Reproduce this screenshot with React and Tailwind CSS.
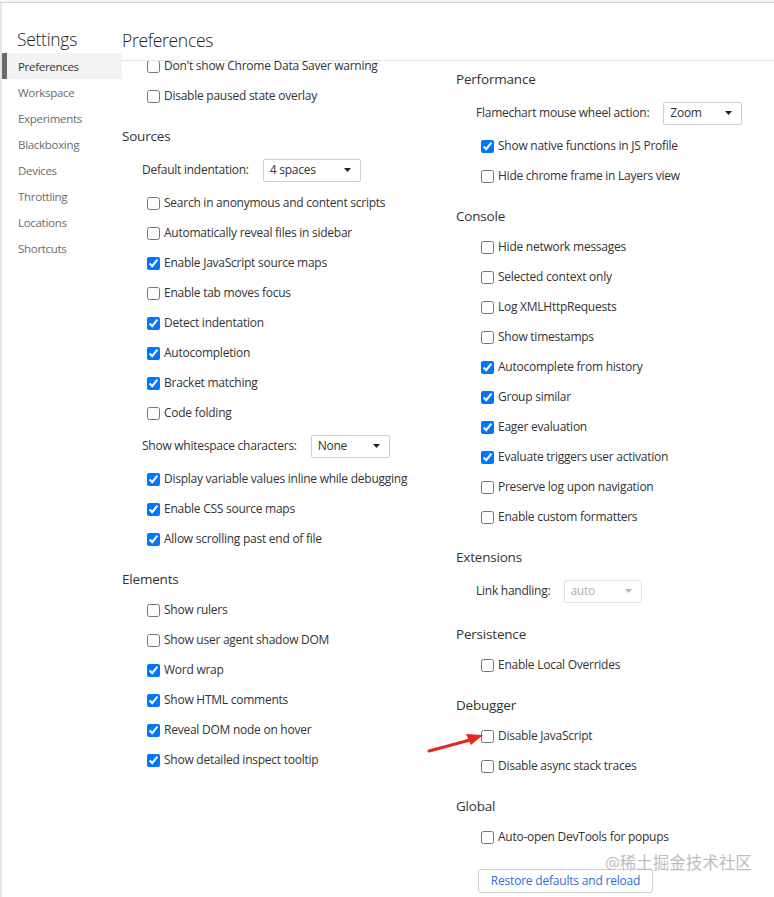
import React from 'react';

const FONT = { fontFamily: '"Open Sans", "Noto Sans CJK SC", sans-serif' };

const sidebar = ['Preferences', 'Workspace', 'Experiments', 'Blackboxing', 'Devices', 'Throttling', 'Locations', 'Shortcuts'];

function Check({ label, checked }) {
    return (
        <label className="flex h-[30px] items-center gap-[4px] pl-[25px] text-[12px] tracking-[-0.25px] text-[#333]">
            <input type="checkbox" defaultChecked={checked} className="m-0 h-[13px] w-[13px]" />
            <span>{label}</span>
        </label>
    );
}

function Select({ label, value, width, disabled }) {
    return (
        <div className="flex h-[36px] items-center gap-[14px] pl-[20px] text-[12px] tracking-[-0.25px] text-[#333]">
            <span>{label}</span>
            <div
                className={
                    disabled
                        ? 'flex h-[23px] items-center justify-between rounded-[2px] border border-[#e3e3e3] pl-[5px] pr-[9px] text-[#b0b0b0]'
                        : 'flex h-[23px] items-center justify-between rounded-[2px] border border-[#cdcdcd] pl-[6px] pr-[9px] text-[#333]'
                }
                style={{ width }}
            >
                <span>{value}</span>
                <svg width="7" height="4" viewBox="0 0 7 4">
                    <path d="M0 0h7L3.5 4z" fill={disabled ? '#b8b8b8' : '#222'} />
                </svg>
            </div>
        </div>
    );
}

function Header({ children }) {
    return (
        <div className="mb-[6px] mt-[15px] h-[20px] text-[13.5px] leading-[20px] tracking-[-0.2px] text-[#333]">
            {children}
        </div>
    );
}

export default function App() {
    return (
        <div className="relative h-[897px] w-[774px] overflow-hidden bg-white" style={FONT}>
            <div className="h-[3px] border-b border-[#d4d4d4] bg-[#f4f4f4]" />
            <div className="flex h-[894px] border-l-2 border-[#e6e6e6]">
                <div className="w-[120px] shrink-0">
                    <div className="mt-[22px] h-[28px] pl-[15px] text-[17.5px] font-light leading-[28px] tracking-[-0.3px] text-[#222]">
                        Settings
                    </div>
                    {sidebar.map((s, i) => (
                        <div
                            key={s}
                            className={
                                i === 0
                                    ? 'flex h-[26px] items-center border-l-[5px] border-[#6b6b6b] bg-[#f3f3f3] pl-[11px] pt-[1px] text-[11.5px] tracking-[-0.3px] text-[#333]'
                                    : 'flex h-[26px] items-center pl-[16px] pt-[1px] text-[11.5px] tracking-[-0.3px] text-[#6b6b6b]'
                            }
                        >
                            {s}
                        </div>
                    ))}
                </div>
                <div className="flex min-w-0 flex-1 flex-col">
                    <div className="h-[58px] shrink-0 border-b border-[#e4e4e4] pt-[23px] text-[17.5px] font-light leading-[28px] tracking-[-0.3px] text-[#222]">
                        Preferences
                    </div>
                    <div className="flex-1 overflow-hidden">
                        <div className="-mt-[10px] grid grid-cols-[334px_1fr]">
                            <div>
                                <Check label="Don't show Chrome Data Saver warning" />
                                <Check label="Disable paused state overlay" />
                                <Header>Sources</Header>
                                <Select label="Default indentation:" value="4 spaces" width={98} />
                                <Check label="Search in anonymous and content scripts" />
                                <Check label="Automatically reveal files in sidebar" />
                                <Check label="Enable JavaScript source maps" checked />
                                <Check label="Enable tab moves focus" />
                                <Check label="Detect indentation" checked />
                                <Check label="Autocompletion" checked />
                                <Check label="Bracket matching" checked />
                                <Check label="Code folding" />
                                <Select label="Show whitespace characters:" value="None" width={79} />
                                <Check label="Display variable values inline while debugging" checked />
                                <Check label="Enable CSS source maps" checked />
                                <Check label="Allow scrolling past end of file" checked />
                                <Header>Elements</Header>
                                <Check label="Show rulers" />
                                <Check label="Show user agent shadow DOM" />
                                <Check label="Word wrap" checked />
                                <Check label="Show HTML comments" checked />
                                <Check label="Reveal DOM node on hover" checked />
                                <Check label="Show detailed inspect tooltip" checked />
                            </div>
                            <div className="pt-[3px]">
                                <Header>Performance</Header>
                                <Select label="Flamechart mouse wheel action:" value="Zoom" width={79} />
                                <Check label="Show native functions in JS Profile" checked />
                                <Check label="Hide chrome frame in Layers view" />
                                <Header>Console</Header>
                                <Check label="Hide network messages" />
                                <Check label="Selected context only" />
                                <Check label="Log XMLHttpRequests" />
                                <Check label="Show timestamps" />
                                <Check label="Autocomplete from history" checked />
                                <Check label="Group similar" checked />
                                <Check label="Eager evaluation" checked />
                                <Check label="Evaluate triggers user activation" checked />
                                <Check label="Preserve log upon navigation" />
                                <Check label="Enable custom formatters" />
                                <Header>Extensions</Header>
                                <Select label="Link handling:" value="auto" width={78} disabled />
                                <Header>Persistence</Header>
                                <Check label="Enable Local Overrides" />
                                <Header>Debugger</Header>
                                <Check label="Disable JavaScript" />
                                <Check label="Disable async stack traces" />
                                <Header>Global</Header>
                                <Check label="Auto-open DevTools for popups" />
                                <div className="ml-[22px] mt-[17px] flex h-[24px] w-[175px] items-center justify-center rounded-[3px] border border-[#cfcfcf] text-[12px] font-medium tracking-[-0.2px] text-[#2f6fd6]">
                                    Restore defaults and reload
                                </div>
                            </div>
                        </div>
                    </div>
                </div>
            </div>

            {/* annotation arrow */}
            <svg className="absolute left-[424px] top-[728px]" width="64" height="28" viewBox="0 0 64 28">
                <path d="M5 23 L46 12" stroke="#e8261f" strokeWidth="3" strokeLinecap="round" />
                <path d="M59 7 L42 6 L47 17 Z" fill="#e8261f" />
            </svg>

            <div className="absolute left-[605px] top-[852px] text-[16.5px] leading-[22px] text-[#bdbdbd]">@稀土掘金技术社区</div>
        </div>
    );
}
